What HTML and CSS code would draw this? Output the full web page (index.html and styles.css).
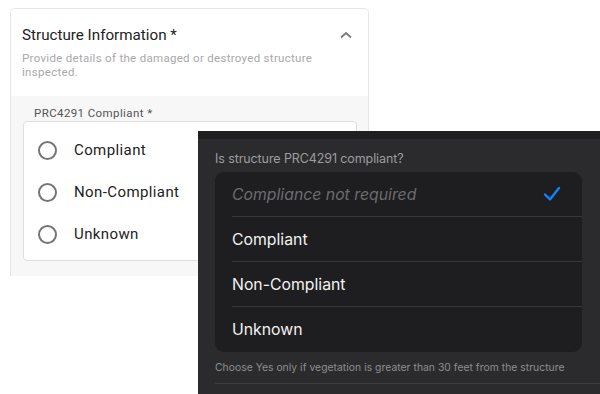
FILE: index.html
```html
<!DOCTYPE html>
<html lang="en">
<head>
    <meta charset="UTF-8">
    <title>PRC4291 Compliance</title>
    <link rel="stylesheet" href="styles.css">
</head>
<body>
    <div class="stage">
        <div class="card">
            <div class="card-header">
                <div class="title-row">
                    <h2>Structure Information *</h2>
                    <svg class="chevron" width="14" height="10" viewBox="0 0 14 10">
                        <path d="M2 7.5 L7 3 L12 7.5" fill="none" stroke="#7a7a7a" stroke-width="1.8"/>
                    </svg>
                </div>
                <p class="subtitle">Provide details of the damaged or destroyed structure inspected.</p>
            </div>
            <div class="card-body">
                <div class="field-label">PRC4291 Compliant *</div>
                <div class="radio-group">
                    <label class="radio-row"><span class="radio"></span>Compliant</label>
                    <label class="radio-row"><span class="radio"></span>Non-Compliant</label>
                    <label class="radio-row"><span class="radio"></span>Unknown</label>
                </div>
            </div>
        </div>

        <!-- iOS picker shown on top of the web form -->
        <div class="sheet">
            <div class="sheet-top"></div>
            <div class="sheet-content">
                <div class="question">Is structure PRC4291 compliant?</div>
                <div class="options">
                    <div class="option placeholder">
                        <span>Compliance not required</span>
                        <svg class="check" width="18" height="16" viewBox="0 0 18 16">
                            <path d="M2 8.5 L7 13.5 L16 2" fill="none" stroke="#0a84ff" stroke-width="2.4" stroke-linecap="round" stroke-linejoin="round"/>
                        </svg>
                    </div>
                    <div class="option"><span>Compliant</span></div>
                    <div class="option"><span>Non-Compliant</span></div>
                    <div class="option"><span>Unknown</span></div>
                </div>
                <div class="hint">Choose Yes only if vegetation is greater than 30 feet from the structure</div>
                <div class="rule"></div>
            </div>
        </div>
    </div>
</body>
</html>
```

FILE: styles.css
```css
* {
    box-sizing: border-box;
    margin: 0;
    padding: 0;
}

body {
    background: #fff;
    font-family: Roboto, "Liberation Sans", sans-serif;
    color: #222;
}

.stage {
    position: relative;
    width: 600px;
    height: 394px;
    overflow: hidden;
    padding: 8px 0 0 10px;
}

.card {
    width: 359px;
    border: 1px solid #e6e6e6;
    border-bottom: none;
    border-radius: 5px 5px 0 0;
    overflow: hidden;
}

.card-header {
    padding: 15px 11px 17px 11px;
    background: #fff;
}

.title-row {
    display: flex;
    justify-content: space-between;
    align-items: center;
}

.title-row h2 {
    font-size: 15.2px;
    font-weight: 400;
    color: #222;
    line-height: 22px;
}

.chevron {
    margin-right: 4px;
}

.subtitle {
    margin-top: 5px;
    font-size: 11.5px;
    line-height: 14px;
    color: #a9a9a9;
    letter-spacing: 0.3px;
    padding-right: 20px;
}

.card-body {
    background: #f7f7f7;
    padding: 10px 11px 15px 12px;
}

.field-label {
    padding-left: 11px;
    font-size: 11.5px;
    line-height: 14px;
    color: #555;
    letter-spacing: 0.4px;
}

.radio-group {
    margin-top: 1px;
    width: 334px;
    height: 140px;
    background: #fff;
    border: 1px solid #dedede;
    border-radius: 4px;
    padding: 7px 0 0 14px;
}

.radio-row {
    display: flex;
    align-items: center;
    height: 42px;
    font-size: 15px;
    color: #222;
    letter-spacing: 0.4px;
}

.radio {
    width: 19px;
    height: 19px;
    border: 2px solid #757575;
    border-radius: 50%;
    margin-right: 17px;
}

.sheet {
    position: absolute;
    left: 198px;
    top: 131px;
    right: 0;
    bottom: 0;
    background: #2b2b2d;
    font-family: Inter, "Open Sans", sans-serif;
}

.sheet-top {
    height: 8px;
    background: #1f1f20;
}

.sheet-content {
    padding: 12px 0 0 17px;
}

.question {
    font-size: 12.5px;
    line-height: 16px;
    color: #9d9d9f;
    letter-spacing: -0.1px;
}

.options {
    margin-top: 5px;
    width: 367px;
    background: #1e1e20;
    border-radius: 9px;
    padding-left: 17px;
}

.option {
    height: 45px;
    display: flex;
    align-items: center;
    justify-content: space-between;
    border-bottom: 1px solid #38383a;
    padding-right: 21px;
    font-size: 15.8px;
    color: #f2f2f2;
}

.option:last-child {
    border-bottom: none;
}

.option.placeholder {
    font-style: italic;
    color: #6c6c6e;
}

.hint {
    margin-top: 8px;
    font-size: 10.3px;
    line-height: 14px;
    color: #8e8e90;
    letter-spacing: 0.05px;
}

.rule {
    margin-top: 9px;
    height: 1px;
    background: #3c3c3e;
}
```
